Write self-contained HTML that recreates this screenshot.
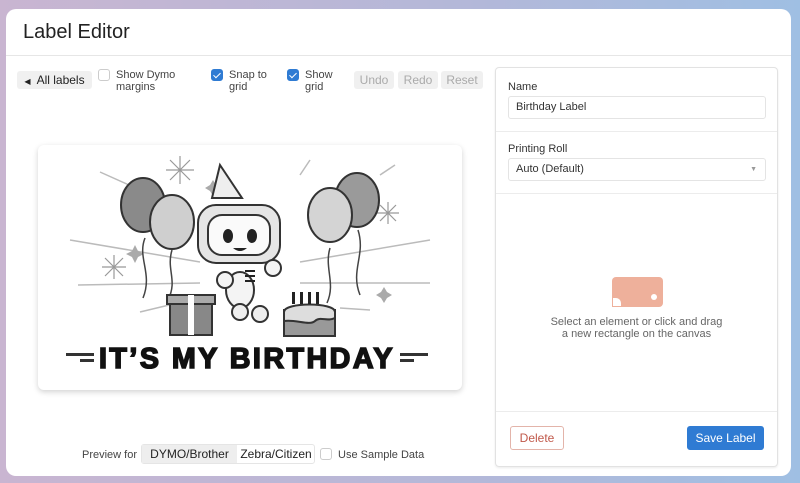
<!DOCTYPE html>
<html><head><style>
*{box-sizing:border-box;margin:0;padding:0}
body{width:800px;height:483px;overflow:hidden;background:linear-gradient(90deg,#c9b5d1,#b3b8d9 60%,#9fbfe3);font-family:"Liberation Sans",sans-serif;color:#333;position:relative}
.win{position:absolute;left:6px;top:9px;width:785px;height:467px;background:#fff;border-radius:10px}
.hdr{position:absolute;left:0;top:0;right:0;height:47px;border-bottom:1px solid #e6e6e6}
.hdr h1{position:absolute;left:17px;top:12px;font-size:20px;font-weight:normal;color:#222}
.t{position:absolute;font-size:11px;line-height:12px;color:#444}
.btn{position:absolute;height:18px;border-radius:3px;background:#f0f0f0;font-size:12px;line-height:18px;text-align:center}
.cb{position:absolute;width:12px;height:12px;border-radius:3px;border:1px solid #ccc;background:#fff}
.cb.on{background:#2f7bd3;border-color:#2f7bd3}
.cb.on:after{content:"";position:absolute;left:3px;top:1px;width:3px;height:6px;border:solid #fff;border-width:0 1.5px 1.5px 0;transform:rotate(45deg)}
.panel{position:absolute;left:489px;top:58px;width:283px;height:400px;border:1px solid #e2e2e2;border-radius:4px;box-shadow:0 1px 2px rgba(0,0,0,.08)}
.inp{position:absolute;left:12px;width:258px;height:23px;border:1px solid #e4e4e4;border-radius:3px;font-size:11px;line-height:21px;padding-left:7px;color:#333}
.lab{position:absolute;left:12px;font-size:11px;color:#333}
.sep{position:absolute;left:0;right:0;height:1px;background:#ececec}
</style></head><body>
<div class="win">
<div class="hdr"><h1>Label Editor</h1></div>
<div class="btn" style="left:11px;top:62px;width:75px;color:#222;font-size:12px"><span style="font-size:8px;margin-right:6px">◀</span>All labels</div>
<div class="cb" style="left:92px;top:60px"></div>
<div class="t" style="left:110px;top:60px">Show Dymo<br>margins</div>
<div class="cb on" style="left:205px;top:60px"></div>
<div class="t" style="left:223px;top:60px">Snap to<br>grid</div>
<div class="cb on" style="left:281px;top:60px"></div>
<div class="t" style="left:299px;top:60px">Show<br>grid</div>
<div class="btn" style="left:348px;top:62px;width:40px;color:#aaa">Undo</div>
<div class="btn" style="left:392px;top:62px;width:40px;color:#aaa">Redo</div>
<div class="btn" style="left:435px;top:62px;width:42px;color:#aaa">Reset</div>

<div style="position:absolute;left:32px;top:136px;width:424px;height:245px;background:#fff;border-radius:6px;box-shadow:0 2px 6px rgba(0,0,0,.18)">
<svg width="424" height="245" viewBox="38 145 424 245" style="position:absolute;left:0;top:0">
<g stroke="#bbb" stroke-width="1.5">
<line x1="100" y1="172" x2="140" y2="190"/><line x1="70" y1="240" x2="200" y2="262"/><line x1="78" y1="285" x2="200" y2="283"/><line x1="140" y1="312" x2="190" y2="300"/>
<line x1="300" y1="283" x2="430" y2="283"/><line x1="300" y1="262" x2="430" y2="240"/><line x1="340" y1="308" x2="370" y2="310"/><line x1="300" y1="175" x2="310" y2="160"/><line x1="380" y1="175" x2="395" y2="165"/>
</g>
<g stroke="#999" stroke-width="1.2"><path d="M170 160l20 20M190 160l-20 20M180 156v28M166 170h28M105 258l18 18M123 258l-18 18M114 255v24M102 267h24M380 205l16 16M396 205l-16 16M388 202v22M377 213h22"/></g>
<g fill="#aaa"><path d="M135 245l3 6 6 3-6 3-3 6-3-6-6-3 6-3z"/><path d="M213 180l3 5 5 3-5 3-3 5-3-5-5-3 5-3z"/><path d="M384 287l3 5 5 3-5 3-3 5-3-5-5-3 5-3z"/></g>
<g fill="none" stroke="#444" stroke-width="1.5"><path d="M145 238c-8 20 8 35-2 60"/><path d="M172 250c-6 20 6 30-4 50"/><path d="M330 248c-6 20 6 35-3 55"/><path d="M358 230c8 25-8 40 2 65"/></g>
<g stroke="#333" stroke-width="2"><ellipse cx="143" cy="205" rx="22" ry="27" fill="#8a8a8a"/><ellipse cx="172" cy="222" rx="22" ry="27" fill="#cfcfcf"/><ellipse cx="357" cy="200" rx="22" ry="27" fill="#9a9a9a"/><ellipse cx="330" cy="215" rx="22" ry="27" fill="#d4d4d4"/>
<path d="M220 165l22 33h-30z" fill="#eee"/>
<rect x="198" y="205" width="82" height="58" rx="18" fill="#e5e5e5"/><rect x="208" y="215" width="62" height="40" rx="14" fill="#fafafa"/>
<ellipse cx="240" cy="290" rx="14" ry="18" fill="#f4f4f4"/><circle cx="225" cy="280" r="8" fill="#f4f4f4"/><circle cx="273" cy="268" r="8" fill="#f4f4f4"/><circle cx="240" cy="312" r="8" fill="#eee"/><circle cx="260" cy="314" r="8" fill="#eee"/>
<rect x="170" y="300" width="42" height="35" fill="#888"/><rect x="167" y="295" width="48" height="9" fill="#aaa"/>
<rect x="284" y="310" width="51" height="26" fill="#999"/><path d="M284 312c0-10 51-10 51 0v6c-8 4-15-2-20 3s-20-2-31 0z" fill="#ddd"/>
</g>
<rect x="188" y="295" width="6" height="40" fill="#fff"/>
<g fill="#222"><ellipse cx="228" cy="236" rx="5" ry="7"/><ellipse cx="252" cy="236" rx="5" ry="7"/><path d="M233 248q7 6 14 0z"/><rect x="292" y="292" width="3" height="12"/><rect x="300" y="292" width="3" height="12"/><rect x="308" y="292" width="3" height="12"/><rect x="316" y="292" width="3" height="12"/><path d="M245 270h10v2h-10zM245 275h10v2h-10zM245 280h10v2h-10z"/></g>
<g fill="#333"><rect x="66" y="353" width="28" height="3"/><rect x="80" y="359" width="14" height="3"/><rect x="400" y="353" width="28" height="3"/><rect x="400" y="359" width="14" height="3"/></g>
<text x="247" y="368" text-anchor="middle" font-family="Liberation Sans" font-weight="900" font-size="29" fill="#111" stroke="#111" stroke-width="1.6" letter-spacing="2.5" textLength="296" lengthAdjust="spacingAndGlyphs">IT’S MY BIRTHDAY</text>
</svg>
</div>

<div class="t" style="left:76px;top:440px;font-size:11px">Preview for</div>
<div style="position:absolute;left:135px;top:435px;width:174px;height:20px;border:1px solid #e5e5e5;border-radius:3px;font-size:12px;line-height:18px;color:#222">
<span style="position:absolute;left:0;top:0;width:95px;height:18px;background:#eee;text-align:center">DYMO/Brother</span>
<span style="position:absolute;left:95px;top:0;width:78px;text-align:center">Zebra/Citizen</span></div>
<div class="cb" style="left:314px;top:439px"></div>
<div class="t" style="left:332px;top:440px">Use Sample Data</div>

<div class="panel">
<div class="lab" style="top:13px">Name</div>
<div class="inp" style="top:28px">Birthday Label</div>
<div class="sep" style="top:63px"></div>
<div class="lab" style="top:75px">Printing Roll</div>
<div class="inp" style="top:90px">Auto (Default)<span style="position:absolute;right:8px;top:0;font-size:7px;color:#999">▼</span></div>
<div class="sep" style="top:125px"></div>
<div style="position:absolute;left:116px;top:209px;width:51px;height:30px;background:#eeb09b;border-radius:4px"><div style="position:absolute;left:0;bottom:0;width:10px;height:10px;background:#fff;border-top-right-radius:6px;border:1px solid #eeb09b"></div><div style="position:absolute;right:6px;bottom:7px;width:6px;height:6px;border-radius:50%;background:#fff"></div></div>
<div style="position:absolute;left:0;right:0;top:248px;text-align:center;font-size:11px;line-height:12px;color:#666">Select an element or click and drag<br>a new rectangle on the canvas</div>
<div class="sep" style="top:343px"></div>
<div style="position:absolute;left:14px;top:358px;width:54px;height:24px;border:1px solid #e3b4aa;border-radius:3px;color:#c0584a;font-size:12px;line-height:22px;text-align:center">Delete</div>
<div style="position:absolute;left:191px;top:358px;width:77px;height:24px;background:#2f7bd3;border-radius:3px;color:#fff;font-size:12px;line-height:24px;text-align:center">Save Label</div>
</div>
</div>
</body></html>
